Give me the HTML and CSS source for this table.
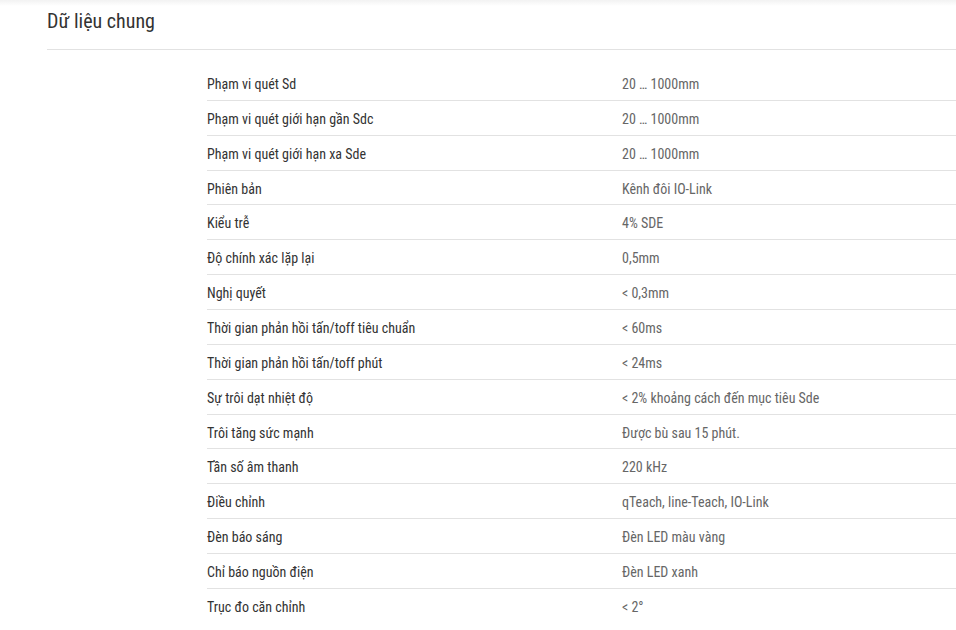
FILE: index.html
```html
<!DOCTYPE html>
<html lang="vi">
<head>
<meta charset="utf-8">
<title>Dữ liệu chung</title>
<link rel="stylesheet" href="styles.css">
</head>
<body>
<div class="topshade"></div>
<section class="section">
  <h2 class="section-title">Dữ liệu chung</h2>
  <div class="spec-table">
    <div class="row"><div class="label">Phạm vi quét Sd</div><div class="value">20 … 1000mm</div></div>
    <div class="row"><div class="label">Phạm vi quét giới hạn gần Sdc</div><div class="value">20 … 1000mm</div></div>
    <div class="row"><div class="label">Phạm vi quét giới hạn xa Sde</div><div class="value">20 … 1000mm</div></div>
    <div class="row"><div class="label">Phiên bản</div><div class="value">Kênh đôi IO-Link</div></div>
    <div class="row"><div class="label">Kiểu trễ</div><div class="value">4% SDE</div></div>
    <div class="row"><div class="label">Độ chính xác lặp lại</div><div class="value">0,5mm</div></div>
    <div class="row"><div class="label">Nghị quyết</div><div class="value">&lt; 0,3mm</div></div>
    <div class="row"><div class="label">Thời gian phản hồi tấn/toff tiêu chuẩn</div><div class="value">&lt; 60ms</div></div>
    <div class="row"><div class="label">Thời gian phản hồi tấn/toff phút</div><div class="value">&lt; 24ms</div></div>
    <div class="row"><div class="label">Sự trôi dạt nhiệt độ</div><div class="value">&lt; 2% khoảng cách đến mục tiêu Sde</div></div>
    <div class="row"><div class="label">Trôi tăng sức mạnh</div><div class="value">Được bù sau 15 phút.</div></div>
    <div class="row"><div class="label">Tần số âm thanh</div><div class="value">220 kHz</div></div>
    <div class="row"><div class="label">Điều chỉnh</div><div class="value">qTeach, line-Teach, IO-Link</div></div>
    <div class="row"><div class="label">Đèn báo sáng</div><div class="value">Đèn LED màu vàng</div></div>
    <div class="row"><div class="label">Chỉ báo nguồn điện</div><div class="value">Đèn LED xanh</div></div>
    <div class="row"><div class="label">Trục đo căn chỉnh</div><div class="value">&lt; 2°</div></div>
  </div>
</section>
</body>
</html>
```
FILE: styles.css
```css
html, body {
  margin: 0;
  padding: 0;
  background: #ffffff;
}
body {
  font-family: "Roboto Condensed", Roboto, "Noto Sans", sans-serif;
  overflow: hidden;
}
.topshade {
  height: 6px;
  background: linear-gradient(#f2f2f2, #ffffff);
}
.section {
  padding-left: 47px;
}
.section-title {
  margin: 0;
  height: 43px;
  line-height: 30px;
  font-size: 20px;
  font-weight: 400;
  color: #333333;
  border-bottom: 1px solid #e2e2e2;
}
.spec-table {
  margin-top: 16px;
  margin-left: 160px;
  font-size: 14px;
}
.row {
  display: grid;
  grid-template-columns: 415px 1fr;
  height: 33.86px;
  line-height: 37px;
  border-bottom: 1px solid #e2e2e2;
}
.row:last-child {
  border-bottom: none;
}
.label {
  color: #333333;
}
.value {
  color: #666666;
}
```
